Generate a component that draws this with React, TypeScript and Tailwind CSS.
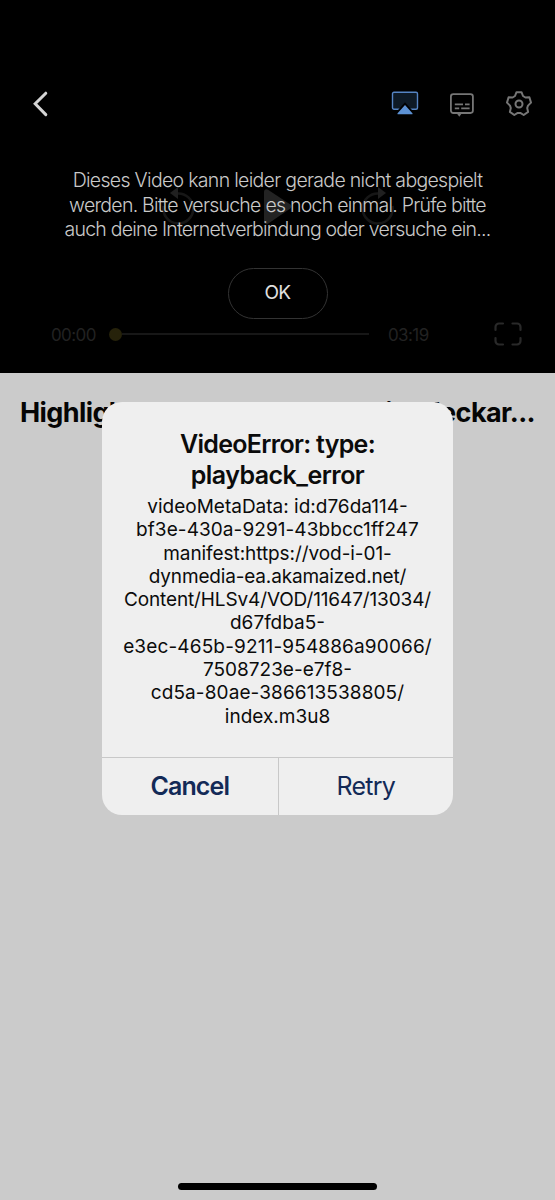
import type { ReactNode } from "react";

const messageLines = [
  { text: "Dieses Video kann leider gerade nicht abgespielt", tracking: "tracking-[-0.69px]" },
  { text: "werden. Bitte versuche es noch einmal. Prüfe bitte", tracking: "tracking-[-0.75px]" },
  { text: "auch deine Internetverbindung oder versuche ein...", tracking: "tracking-[-0.78px]" },
];

const metaLines = [
  { text: "videoMetaData: id:d76da114-", tracking: "tracking-normal" },
  { text: "bf3e-430a-9291-43bbcc1ff247", tracking: "tracking-[0.07px]" },
  { text: "manifest:https://vod-i-01-", tracking: "tracking-[-0.07px]" },
  { text: "dynmedia-ea.akamaized.net/", tracking: "tracking-[-0.17px]" },
  { text: "Content/HLSv4/VOD/11647/13034/", tracking: "tracking-[-0.13px]" },
  { text: "d67fdba5-", tracking: "tracking-normal" },
  { text: "e3ec-465b-9211-954886a90066/", tracking: "tracking-[0.14px]" },
  { text: "7508723e-e7f8-", tracking: "tracking-normal" },
  { text: "cd5a-80ae-386613538805/", tracking: "tracking-[0.1px]" },
  { text: "index.m3u8", tracking: "tracking-normal" },
];

function IconButton({ label, className, children }: { label: string; className?: string; children: ReactNode }) {
  return (
    <button aria-label={label} className={className}>
      {children}
    </button>
  );
}

function BackIcon() {
  return (
    <svg width="18" height="28" viewBox="0 0 18 28" fill="none" stroke="#d4d4d4" strokeWidth="3" strokeLinecap="round" strokeLinejoin="miter">
      <path d="M13.800 3.200 3.200 13.800l10.600 10.800" />
    </svg>
  );
}

function AirplayIcon() {
  return (
    <svg width="28" height="26" viewBox="0 0 28 26">
      <rect x="1.500" y="1.200" width="25" height="17" rx="1.500" fill="#0e1a26" stroke="#5584c3" strokeWidth="1.400" />
      <path d="M14 11.200 4.800 21.500V25h18.400v-3.500z" fill="#000" />
      <path d="M14 14 6.600 22.300a.6.6 0 0 0 .4 1h14a.6.6 0 0 0 .4-1z" fill="#5c91d4" />
    </svg>
  );
}

function SubtitlesIcon() {
  return (
    <svg width="26" height="28" viewBox="0 0 26 28" fill="none" stroke="#767676" strokeWidth="1.800">
      <rect x="1.900" y="4.200" width="22" height="18.800" rx="2.400" />
      <path d="M7.500 23h5.500L10.300 26.800z" fill="#767676" stroke="none" />
      <path d="M5.800 14.300h8.200M16 14.300h4.600M5.800 18.300h4.400M12.200 18.300h8.400" />
    </svg>
  );
}

function SettingsIcon() {
  return (
    <svg width="28" height="28" viewBox="0 0 28 28" fill="none" stroke="#767676" strokeWidth="2" strokeLinejoin="round">
      <path d="M11.500 2.200h5l1.500 3.800 2.400 1.500 4-.2 1.600 5.300-3 3-.8 2.400.9 3.900-4.400 3.100-3.400-2.100h-2.600l-3.400 2.100-4.400-3.100.9-3.900-.8-2.400-3-3 1.600-5.300 4 .2L10 6z" />
      <circle cx="14" cy="14" r="3.500" />
    </svg>
  );
}

function SkipIcon({ forward = false }: { forward?: boolean }) {
  return (
    <svg width="36" height="40" viewBox="0 0 36 40" className={forward ? "-scale-x-100" : ""}>
      <path d="M3.500 19A15 15 0 1 0 17 6.500" fill="none" stroke="#171717" strokeWidth="2.600" />
      <path d="M18 0v12L10 6z" fill="#202020" />
    </svg>
  );
}

function PlayIcon() {
  return (
    <svg width="32" height="40" viewBox="0 0 32 40">
      <path d="M2 5C2 2.500 4 1.500 6 2.800l22 14.400c1.800 1.300 1.800 3.300 0 4.600L6 36.700c-2 1.300-4 .3-4-2.200z" fill="#232323" />
    </svg>
  );
}

function FullscreenIcon() {
  return (
    <svg width="28" height="24" viewBox="0 0 28 24" fill="none" stroke="#292929" strokeWidth="2.200" strokeLinecap="round">
      <path d="M9 1.500H5A3.500 3.500 0 0 0 1.500 5v3M18.500 1.500H23A3.500 3.500 0 0 1 26.500 5v3M9 22.500H5A3.500 3.500 0 0 1 1.500 19v-3M18.500 22.500H23a3.500 3.500 0 0 0 3.500-3.500v-3" />
    </svg>
  );
}

function Player() {
  return (
    <section className="relative h-[373px] bg-black pt-[88px]">
      <div className="flex h-8 items-center justify-between pr-[22px] pl-8">
        <IconButton label="Zurück">
          <BackIcon />
        </IconButton>
        <div className="flex items-center gap-[30px]">
          <IconButton label="AirPlay">
            <AirplayIcon />
          </IconButton>
          <IconButton label="Untertitel">
            <SubtitlesIcon />
          </IconButton>
          <IconButton label="Einstellungen">
            <SettingsIcon />
          </IconButton>
        </div>
      </div>

      <div className="mt-[67px] flex h-10 items-center justify-center gap-[66px]">
        <SkipIcon />
        <PlayIcon />
        <SkipIcon forward />
      </div>

      <div className="mt-[95px] flex h-6 items-center pr-[33px] pl-[51px] text-[17px] leading-[22px] tracking-[-0.6px] text-[#222]">
        <span className="w-[58px] pt-[2px]">00:00</span>
        <div className="flex w-[260px] items-center">
          <div className="h-[13px] w-[13px] rounded-full bg-[#26220a]" />
          <div className="h-[2px] flex-1 bg-[#171717]" />
        </div>
        <span className="ml-[19px] pt-[2px]">03:19</span>
        <div className="ml-auto">
          <FullscreenIcon />
        </div>
      </div>

      {/* error message sits over the dimmed controls */}
      <div className="absolute inset-x-0 top-[168px] flex flex-col items-center text-[#c9c9c9]">
        <div className="text-[19.5px] leading-[24.5px] font-light">
          {messageLines.map((line) => (
            <p key={line.text} className={`text-center whitespace-nowrap ${line.tracking}`}>
              {line.text}
            </p>
          ))}
        </div>
        <button className="mt-[26px] h-[51px] w-[100px] rounded-full border border-[#333] pt-px text-[19px] tracking-[-0.6px] text-[#e0e0e0]">
          OK
        </button>
      </div>
    </section>
  );
}

function ErrorDialog() {
  return (
    <div
      role="alertdialog"
      className="absolute top-[402px] left-[102px] flex h-[413px] w-[351px] flex-col overflow-hidden rounded-[20px] bg-[#efefef] text-center text-[#0b0b0b]"
    >
      <div className="flex-1 pt-[27px]">
        <h2 className="text-[25px] leading-[31px] font-semibold">
          <span className="tracking-[-0.7px]">VideoError: type:</span>
          <br />
          <span className="tracking-[-0.55px]">playback_error</span>
        </h2>
        <div className="mt-[4px] text-[19px] leading-[23.3px]">
          {metaLines.map((line) => (
            <p key={line.text} className={`whitespace-nowrap ${line.tracking}`}>
              {line.text}
            </p>
          ))}
        </div>
      </div>
      <div className="grid h-[58px] grid-cols-2 border-t border-[#c8c8c8] text-[25px] text-[#132a57]">
        <button className="pt-px font-semibold tracking-[-0.9px]">Cancel</button>
        <button className="border-l border-[#c8c8c8] pt-px tracking-[-0.8px]">Retry</button>
      </div>
    </div>
  );
}

export default function App() {
  return (
    <div className="relative flex h-[1200px] w-[555px] flex-col overflow-hidden bg-[#cbcbcb] font-['Inter',sans-serif]">
      <Player />
      <h1 className="flex justify-between pt-[23px] pr-[20px] pl-[20px] text-[27px] leading-[34px] font-bold tracking-[-0.6px] text-[#050505]">
        <span>Highlights:</span>
        <span>Rhein-Neckar...</span>
      </h1>
      <ErrorDialog />
      <div className="mx-auto mt-auto mb-[10px] h-[7px] w-[199px] rounded-full bg-black" />
    </div>
  );
}
